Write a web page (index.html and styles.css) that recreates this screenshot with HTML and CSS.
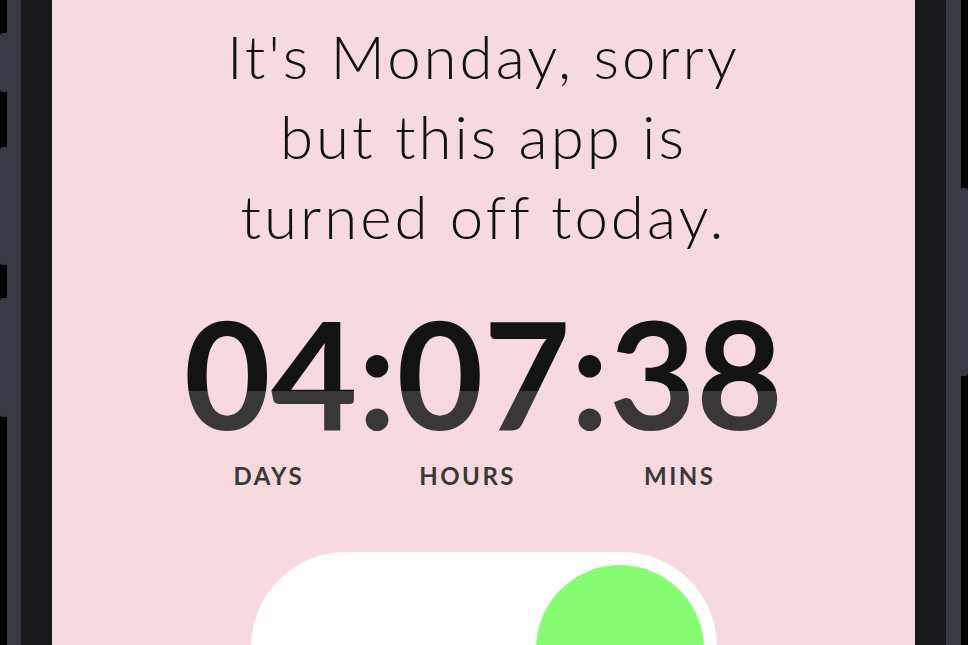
FILE: index.html
```html
<!DOCTYPE html>
<html lang="en">
<head>
<meta charset="utf-8">
<title>Monday</title>
<link rel="stylesheet" href="styles.css">
</head>
<body>
<div class="device">
  <div class="rail rail-left">
    <span class="btn btn-l btn-1"></span>
    <span class="btn btn-l btn-2"></span>
    <span class="btn btn-l btn-3"></span>
  </div>
  <div class="bezel-outer"></div>
  <div class="bezel-inner"></div>
  <main class="screen">
    <h1 class="title">It's Monday, sorry<br>but this app is<br>turned off today.</h1>
    <div class="countdown">04:07:38</div>
    <div class="labels">
      <span class="label">DAYS</span>
      <span class="label">HOURS</span>
      <span class="label mins">MINS</span>
    </div>
    <div class="toggle">
      <div class="knob"></div>
    </div>
  </main>
  <div class="bezel-inner"></div>
  <div class="bezel-outer bezel-outer-r"></div>
  <div class="rail rail-right">
    <span class="btn btn-r btn-4"></span>
  </div>
</div>
</body>
</html>
```
FILE: styles.css
```css
html, body {
  margin: 0;
  padding: 0;
  background: #000;
  overflow: hidden;
}
.device {
  display: flex;
  width: 968px;
  height: 645px;
  overflow: hidden;
}
.rail {
  width: 7px;
  flex: none;
  background: #000;
  display: flex;
  flex-direction: column;
}
.btn {
  display: block;
  background: #373a43;
}
.btn-l { border-radius: 3px 0 0 3px; }
.btn-r { border-radius: 0 3px 3px 0; }
.btn-1 { margin-top: 33px; height: 59px; }
.btn-2 { margin-top: 55px; height: 118px; }
.btn-3 { margin-top: 33px; height: 119px; }
.btn-4 { margin-top: 188px; height: 188px; }
.bezel-outer {
  width: 14px;
  flex: none;
  background: #373a43;
}
.bezel-outer-r { width: 15px; }
.bezel-inner {
  width: 31px;
  flex: none;
  background: #19191c;
}
.screen {
  width: 863px;
  flex: none;
  height: 645px;
  overflow: hidden;
  background: #f7dadf;
  display: flex;
  flex-direction: column;
  align-items: center;
  font-family: Lato, "Open Sans", sans-serif;
}
.title {
  margin: 16px 0 0;
  font-weight: 300;
  font-size: 60px;
  line-height: 80px;
  text-align: center;
  color: #111;
  letter-spacing: 3px;
}
.countdown {
  margin-top: 41px;
  font-size: 150px;
  line-height: 150px;
  font-weight: 700;
  padding: 0 6px;
  background: linear-gradient(#131313 0 94px, #3a3738 94px);
  -webkit-background-clip: text;
  background-clip: text;
  color: transparent;
}
.labels {
  margin-top: 14px;
  display: flex;
  gap: 115px;
  margin-left: -18px;
}
.label {
  font-size: 24px;
  line-height: 30px;
  font-weight: 700;
  letter-spacing: 2.5px;
  color: #3b3839;
}
.mins { margin-left: 13px; }
.toggle {
  margin-top: 61px;
  width: 466px;
  height: 190px;
  flex: none;
  background: #fff;
  border-radius: 95px;
  box-sizing: border-box;
  padding: 13px;
  display: flex;
  justify-content: flex-end;
}
.knob {
  width: 168px;
  height: 168px;
  border-radius: 50%;
  background: #86fd73;
}
```
